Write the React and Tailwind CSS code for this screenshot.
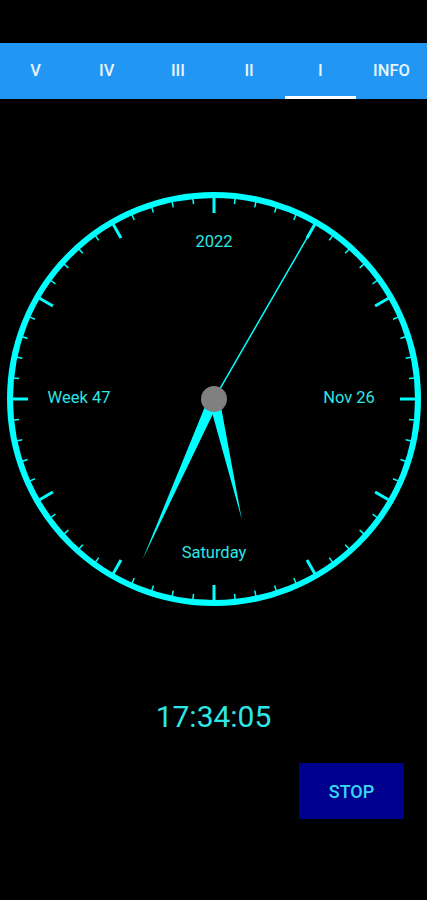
import React from 'react'

const CX = 214
const CY = 209
const tabs = ['V', 'IV', 'III', 'II', 'I', 'INFO']

// point at angle (deg, clockwise from 12) and radius
const pt = (deg, r) => {
  const a = (deg * Math.PI) / 180
  return [CX + r * Math.sin(a), CY - r * Math.cos(a)]
}

const hand = (deg, len, half) => {
  const [tx, ty] = pt(deg, len)
  const [lx, ly] = pt(deg - 90, half)
  const [rx, ry] = pt(deg + 90, half)
  return `${lx},${ly} ${tx},${ty} ${rx},${ry}`
}

function Clock() {
  const ticks = []
  for (let i = 0; i < 60; i++) {
    const major = i % 5 === 0
    const [x1, y1] = pt(i * 6, 202)
    const [x2, y2] = pt(i * 6, major ? 186 : 196)
    ticks.push(
      <line key={i} x1={x1} y1={y1} x2={x2} y2={y2} stroke="#00ffff" strokeWidth={major ? 3 : 1.5} />
    )
  }
  const [sx, sy] = pt(30, 197)
  const label = { fill: '#2ee6e6', fontSize: 16.5, fontFamily: 'Roboto, sans-serif', textAnchor: 'middle', dominantBaseline: 'central' }

  return (
    <svg width="427" height="420" viewBox="0 0 427 420" className="block">
      <circle cx={CX} cy={CY} r="204" fill="none" stroke="#00ffff" strokeWidth="6" />
      {ticks}
      <text x={CX} y={51} style={label}>2022</text>
      <text x={79} y={207} style={label}>Week 47</text>
      <text x={349} y={207} style={label}>Nov 26</text>
      <text x={CX} y={362} style={label}>Saturday</text>
      <polygon points={hand(167, 124, 5.5)} fill="#00ffff" />
      <polygon points={hand(204, 176, 5.5)} fill="#00ffff" />
      <line x1={CX} y1={CY} x2={sx} y2={sy} stroke="#00ffff" strokeWidth="1.5" />
      <circle cx={CX} cy={CY} r="13" fill="#808080" />
    </svg>
  )
}

export default function App() {
  return (
    <div className="w-[427px] h-[900px] bg-black font-['Roboto',sans-serif] overflow-hidden">
      <div className="h-[43px]" />
      <div className="h-[56px] bg-[#2196f3] flex">
        {tabs.map((t) => (
          <div key={t} className="flex-1 relative flex items-center justify-center text-white/90 text-[16.5px] font-medium">
            {t}
            {t === 'I' && <div className="absolute bottom-0 left-0 right-0 h-[3px] bg-white" />}
          </div>
        ))}
      </div>
      <div className="mt-[91px]">
        <Clock />
      </div>
      <div className="mt-[89px] text-center text-[30px] leading-[36px] text-[#2ee6e6]">17:34:05</div>
      <div className="mt-[28px] flex justify-end pr-[23px]">
        <button className="w-[105px] h-[56px] bg-[#00008f] text-[#38d8f0] text-[18px] font-medium">STOP</button>
      </div>
    </div>
  )
}
